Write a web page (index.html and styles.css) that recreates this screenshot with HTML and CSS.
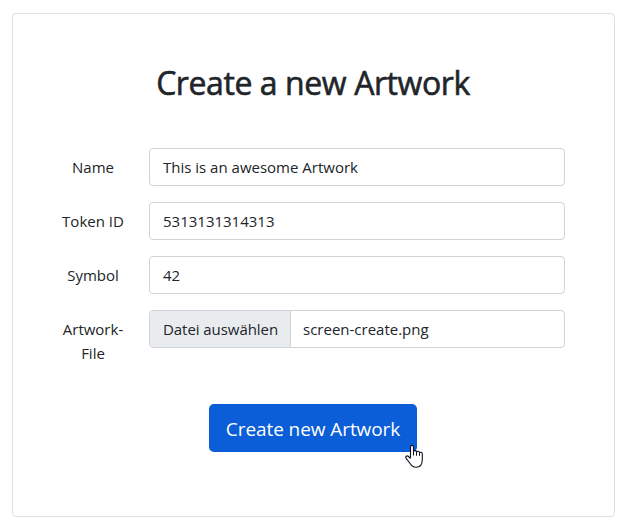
FILE: index.html
```html
<!DOCTYPE html>
<html lang="de">
<head>
<meta charset="utf-8">
<title>Create a new Artwork</title>
<link rel="stylesheet" href="styles.css">
</head>
<body>
<main class="card">
  <h1 class="title">Create a new Artwork</h1>
  <form class="form">
    <div class="row"><label class="label">Name</label><div class="control">This is an awesome Artwork</div></div>
    <div class="row"><label class="label">Token ID</label><div class="control">5313131314313</div></div>
    <div class="row"><label class="label">Symbol</label><div class="control">42</div></div>
    <div class="row"><label class="label">Artwork-<br>File</label><div class="control file"><span class="pick">Datei auswählen</span><span>screen-create.png</span></div></div>
    <button class="submit" type="button"><span>Create new Artwork</span>
      <svg class="cursor" width="18" height="24" viewBox="0 0 18 24"><path d="M5.5 13.5V2.7C5.5 .9 8.5.9 8.5 2.7V7.5C9 6.2 11.5 6.4 11.5 8C12 6.8 14.5 7.1 14.5 8.8C15 7.8 17.3 8.2 17.3 10V15.5C17.3 20 15.1 23.3 11 23.3C7.7 23.3 6.2 21.4 4.7 19L1 14.2C-.1 12.4 2.2 11.2 3.5 12.5L5.5 14.5" fill="#fff" stroke="#10101c" stroke-width="1.1" stroke-linejoin="round"/><path d="M8.5 7v4.5M11.5 8v3.7M14.5 8.8v3" fill="none" stroke="#10101c"/></svg>
    </button>
  </form>
</main>
</body>
</html>
```
FILE: styles.css
```css
* { box-sizing: border-box; }
body {
  margin: 0;
  padding: 13px 9px 7px 12px;
  background: #fff;
  color: #212529;
  font: 400 16px/24px "Open Sans", "Noto Sans", sans-serif;
}
.card {
  height: 504px;
  padding: 49px 49px 0 48px;
  border: 1px solid #dfdfdf;
  border-radius: 4px;
}
.title {
  margin: 0 0 47px;
  padding-top: 1px;
  font-size: 32px;
  line-height: 37px;
  font-weight: 500;
  text-align: center;
  letter-spacing: -0.42px;
  -webkit-text-stroke: 0.6px #212529;
  white-space: nowrap;
}
.form { display: flex; flex-direction: column; }
.row { display: flex; height: 38px; margin-bottom: 16px; }
.label {
  width: 64px;
  margin-right: 24px;
  padding-top: 7px;
  text-align: center;
  font-size: 15px;
  white-space: nowrap;
}
.control {
  flex: 1;
  display: flex;
  align-items: center;
  padding: 0 12px 0 13px;
  border: 1px solid #ced4da;
  border-radius: 4px;
  font-size: 15px;
  white-space: nowrap;
  overflow: hidden;
}
.file { padding-left: 0; }
.pick {
  width: 141px;
  height: 36px;
  margin-right: 12px;
  padding: 6px 0 0 13px;
  border-right: 1px solid #ced4da;
  background: #e9ecef;
  letter-spacing: -0.06px;
}
.submit {
  position: relative;
  align-self: center;
  width: 208px;
  height: 48px;
  margin: 40px 0 0;
  padding: 2px 0 0;
  border: 0;
  border-radius: 5px;
  background: #0b5ed7;
  color: #fff;
  font: 400 19px/30px "Open Sans", "Noto Sans", sans-serif;
  letter-spacing: -0.08px;
  white-space: nowrap;
}
.cursor { position: absolute; left: 196px; top: 40px; }
```
